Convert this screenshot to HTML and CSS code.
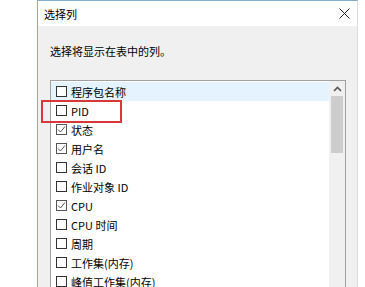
FILE: index.html
```html
<!DOCTYPE html>
<html lang="zh-CN">
<head>
    <meta charset="UTF-8">
    <title>选择列</title>
    <link rel="stylesheet" href="styles.css">
</head>
<body>
    <div class="dialog">
        <div class="titlebar">
            <span class="title">选择列</span>
            <svg class="close" width="11" height="11" viewBox="0 0 11 11">
                <path d="M0.5 0.5 L10.5 10.5 M10.5 0.5 L0.5 10.5" stroke="#222" stroke-width="1" fill="none"/>
            </svg>
        </div>
        <div class="content">
            <p class="desc">选择将显示在表中的列。</p>
            <div class="listbox">
                <div class="rows">
                    <div class="row hover"><span class="box"></span><span class="label">程序包名称</span></div>
                    <div class="row"><span class="box"></span><span class="label">PID</span></div>
                    <div class="row"><span class="box checked"><svg width="9" height="9" viewBox="0 0 9 9"><path d="M1 4.5 L3.5 7 L8 1.5" stroke="#555" stroke-width="1" fill="none"/></svg></span><span class="label">状态</span></div>
                    <div class="row"><span class="box checked"><svg width="9" height="9" viewBox="0 0 9 9"><path d="M1 4.5 L3.5 7 L8 1.5" stroke="#555" stroke-width="1" fill="none"/></svg></span><span class="label">用户名</span></div>
                    <div class="row"><span class="box"></span><span class="label">会话 ID</span></div>
                    <div class="row"><span class="box"></span><span class="label">作业对象 ID</span></div>
                    <div class="row"><span class="box checked"><svg width="9" height="9" viewBox="0 0 9 9"><path d="M1 4.5 L3.5 7 L8 1.5" stroke="#555" stroke-width="1" fill="none"/></svg></span><span class="label">CPU</span></div>
                    <div class="row"><span class="box"></span><span class="label">CPU 时间</span></div>
                    <div class="row"><span class="box"></span><span class="label">周期</span></div>
                    <div class="row"><span class="box"></span><span class="label">工作集(内存)</span></div>
                    <div class="row"><span class="box"></span><span class="label">峰值工作集(内存)</span></div>
                </div>
                <div class="scrollbar">
                    <div class="arrow">
                        <svg width="9" height="6" viewBox="0 0 9 6"><path d="M1 5 L4.5 1.5 L8 5" stroke="#555" stroke-width="1.6" fill="none"/></svg>
                    </div>
                    <div class="thumb"></div>
                </div>
            </div>
        </div>
    </div>
    <div class="mark"></div>
</body>
</html>
```

FILE: styles.css
```css
body {
    margin: 0;
    background: #fff;
    font-family: "Noto Sans CJK SC", "Noto Sans", sans-serif;
    font-size: 11px;
    color: #000;
    overflow: hidden;
}
.dialog {
    margin-left: 37px;
    width: 319px;
    height: 300px;
    border-left: 1px solid #86abcb;
    border-right: 1px solid #dcdcdc;
    border-top: 1px solid #86abcb;
    display: flex;
    flex-direction: column;
}
.titlebar {
    height: 27px;
    background: #fff;
    display: flex;
    align-items: center;
    justify-content: space-between;
    padding: 0 8px 0 6px;
}
.title {
    line-height: 16px;
}
.close {
    margin-right: -1px;
}
.content {
    flex: 1;
    background: #f0f0f0;
    padding: 17px 0 0 12px;
}
.desc {
    margin: 0 0 21px 0;
    line-height: 16px;
    height: 16px;
}
.listbox {
    width: 294px;
    border: 1px solid #a0a0a0;
    border-bottom: none;
    background: #fff;
    display: flex;
    height: 220px;
}
.rows {
    flex: 1;
    padding-top: 1px;
}
.row {
    height: 19px;
    display: flex;
    align-items: center;
    padding-left: 5px;
}
.row.hover {
    background: #e5f3ff;
}
.label {
    line-height: 15px;
    margin-top: 2px;
}
.box {
    width: 11px;
    height: 11px;
    box-sizing: border-box;
    border: 1px solid #333;
    background: #fff;
    margin-right: 4px;
    display: flex;
    align-items: center;
    justify-content: center;
}
.box.checked {
    border-color: #555;
}
.scrollbar {
    width: 16px;
    background: #f0f0f0;
    display: flex;
    flex-direction: column;
    align-items: center;
}
.arrow {
    height: 15px;
    display: flex;
    align-items: center;
    justify-content: center;
}
.thumb {
    width: 12px;
    height: 57px;
    background: #cdcdcd;
}
.mark {
    position: absolute;
    left: 41px;
    top: 100px;
    width: 77px;
    height: 19px;
    border: 2px solid #d9383a;
}
```
